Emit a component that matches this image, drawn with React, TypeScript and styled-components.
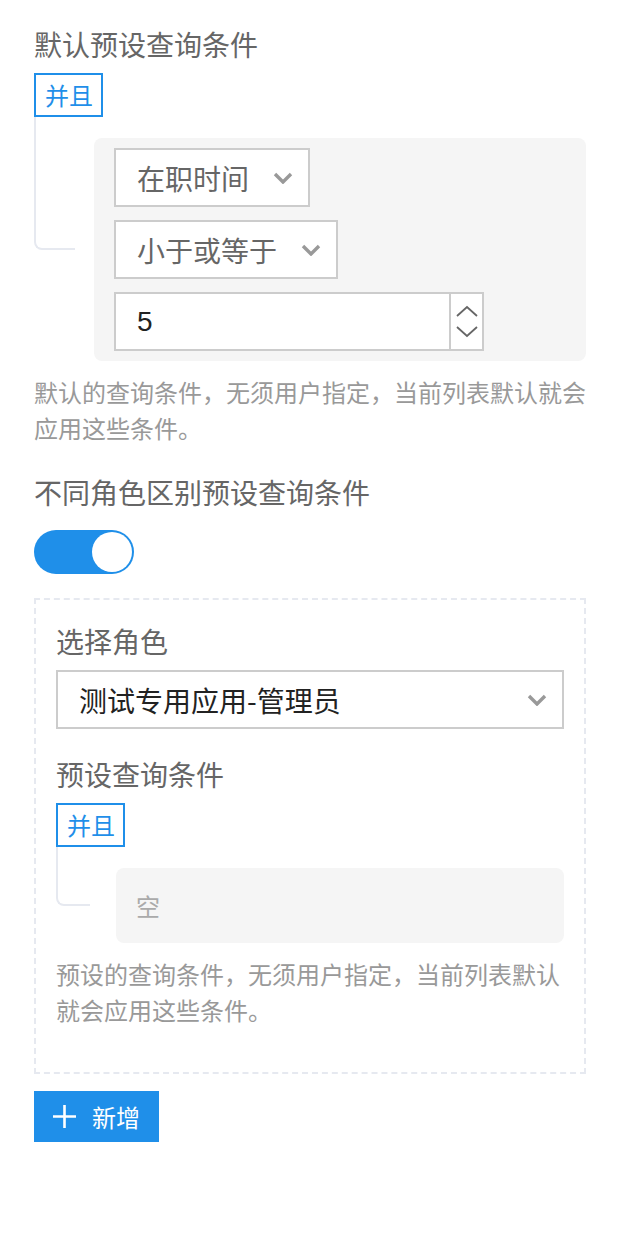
import React from "react";
import styled, { createGlobalStyle } from "styled-components";

const blue = "#1f8fe9";
const lineColor = "#e6e9f0";

const GlobalStyle = createGlobalStyle`
  html, body {
    margin: 0;
    padding: 0;
    background: #ffffff;
  }

  body {
    font-family: "Noto Sans CJK SC", "Noto Sans", sans-serif;
  }
`;

const Chevron = () => (
  <svg width="20" height="12" viewBox="0 0 20 12">
    <polyline points="2,2 10,10 18,2" fill="none" stroke="#999" strokeWidth="3.4" />
  </svg>
);

const SpinArrow = ({ up }: { up?: boolean }) => (
  <svg width="22" height="12" viewBox="0 0 22 12">
    <polyline
      points={up ? "1,11 11,2 21,11" : "1,1 11,10 21,1"}
      fill="none"
      stroke="#666"
      strokeWidth="1.8"
    />
  </svg>
);

const PlusIcon = () => (
  <svg width="23" height="23" viewBox="0 0 23 23">
    <path d="M11.5 0 V23 M0 11.5 H23" stroke="#fff" strokeWidth="2.6" />
  </svg>
);

const App = () => {
  return (
    <Page>
      <GlobalStyle />

      <Label>默认预设查询条件</Label>
      <Group>
        <Operator>并且</Operator>
        <GroupBody $reach={39}>
          <ConditionBox>
            <Select>
              <span>在职时间</span>
              <Chevron />
            </Select>
            <Select>
              <span>小于或等于</span>
              <Chevron />
            </Select>
            <NumberInput>
              <NumberValue>5</NumberValue>
              <Spinner>
                <SpinArrow up />
                <SpinArrow />
              </Spinner>
            </NumberInput>
          </ConditionBox>
        </GroupBody>
      </Group>
      <Hint>默认的查询条件，无须用户指定，当前列表默认就会应用这些条件。</Hint>

      <Label $top={25}>不同角色区别预设查询条件</Label>
      <Toggle>
        <Knob />
      </Toggle>

      <RolePanel>
        <Label>选择角色</Label>
        <Select $block $dark>
          <span>测试专用应用-管理员</span>
          <Chevron />
        </Select>

        <Label $top={24}>预设查询条件</Label>
        <Group>
          <Operator>并且</Operator>
          <GroupBody $reach={32}>
            <EmptyBox>空</EmptyBox>
          </GroupBody>
        </Group>
        <Hint>预设的查询条件，无须用户指定，当前列表默认就会应用这些条件。</Hint>
      </RolePanel>

      <AddButton>
        <PlusIcon />
        <span>新增</span>
      </AddButton>
    </Page>
  );
};

const Page = styled.div`
  width: 552px;
  padding: 23px 38px 60px 34px;
  display: flex;
  flex-direction: column;
  align-items: flex-start;
`;

const Label = styled.div<{ $top?: number }>`
  margin-top: ${(p) => p.$top ?? 0}px;
  margin-bottom: 8px;
  font-size: 28px;
  line-height: 42px;
  color: #666;
`;

const Group = styled.div`
  display: flex;
  flex-direction: column;
  align-items: flex-start;
  width: 100%;
`;

const Operator = styled.div`
  box-sizing: border-box;
  height: 44px;
  padding: 0 8px 0 9px;
  border: 2px solid ${blue};
  color: ${blue};
  font-size: 24px;
  line-height: 40px;
`;

const GroupBody = styled.div<{ $reach: number }>`
  position: relative;
  box-sizing: border-box;
  width: 100%;
  padding: 21px 0 0 60px;

  &::before {
    content: "";
    position: absolute;
    top: 0;
    left: 0;
    width: ${(p) => p.$reach}px;
    bottom: calc((100% - 21px) / 2);
    border-left: 2px solid ${lineColor};
    border-bottom: 2px solid ${lineColor};
    border-bottom-left-radius: 8px;
  }
`;

const ConditionBox = styled.div`
  display: flex;
  flex-direction: column;
  align-items: flex-start;
  gap: 13px;
  padding: 10px 20px;
  background: #f5f5f5;
  border-radius: 8px;
`;

const Select = styled.div<{ $block?: boolean; $dark?: boolean }>`
  box-sizing: border-box;
  display: flex;
  align-items: center;
  justify-content: space-between;
  gap: 24px;
  width: ${(p) => (p.$block ? "100%" : "auto")};
  height: 59px;
  padding: 0 15px 0 21px;
  border: 2px solid #ccc;
  background: #fff;
  font-size: 28px;
  color: ${(p) => (p.$dark ? "#222" : "#666")};

  svg {
    flex: none;
  }
`;

const NumberInput = styled.div`
  box-sizing: border-box;
  display: flex;
  width: 370px;
  height: 59px;
  border: 2px solid #ccc;
  background: #fff;
`;

const NumberValue = styled.div`
  flex: 1;
  display: flex;
  align-items: center;
  padding-left: 21px;
  font-family: "Liberation Sans", Arial, sans-serif;
  font-size: 28px;
  color: #222;
`;

const Spinner = styled.div`
  width: 31px;
  border-left: 2px solid #ccc;
  display: flex;
  flex-direction: column;
  align-items: center;
  justify-content: center;
  gap: 9px;
`;

const Hint = styled.div`
  margin-top: 13px;
  font-size: 24px;
  line-height: 36px;
  color: #999;
`;

const Toggle = styled.div`
  box-sizing: border-box;
  margin-top: 9px;
  width: 100px;
  height: 44px;
  padding: 2px;
  border-radius: 22px;
  background: ${blue};
  display: flex;
  justify-content: flex-end;
`;

const Knob = styled.div`
  width: 40px;
  height: 40px;
  border-radius: 50%;
  background: #fff;
`;

const RolePanel = styled.div`
  box-sizing: border-box;
  width: 100%;
  margin-top: 24px;
  padding: 20px 20px 44px;
  border: 2px dashed ${lineColor};
  display: flex;
  flex-direction: column;
  align-items: flex-start;
`;

const EmptyBox = styled.div`
  display: flex;
  align-items: center;
  height: 75px;
  padding: 0 20px;
  background: #f5f5f5;
  border-radius: 8px;
  font-size: 24px;
  color: #aaa;
`;

const AddButton = styled.div`
  margin-top: 17px;
  height: 51px;
  padding: 0 19px;
  display: flex;
  align-items: center;
  gap: 16px;
  background: ${blue};
  color: #fff;
  font-size: 24px;
`;

export default App;
